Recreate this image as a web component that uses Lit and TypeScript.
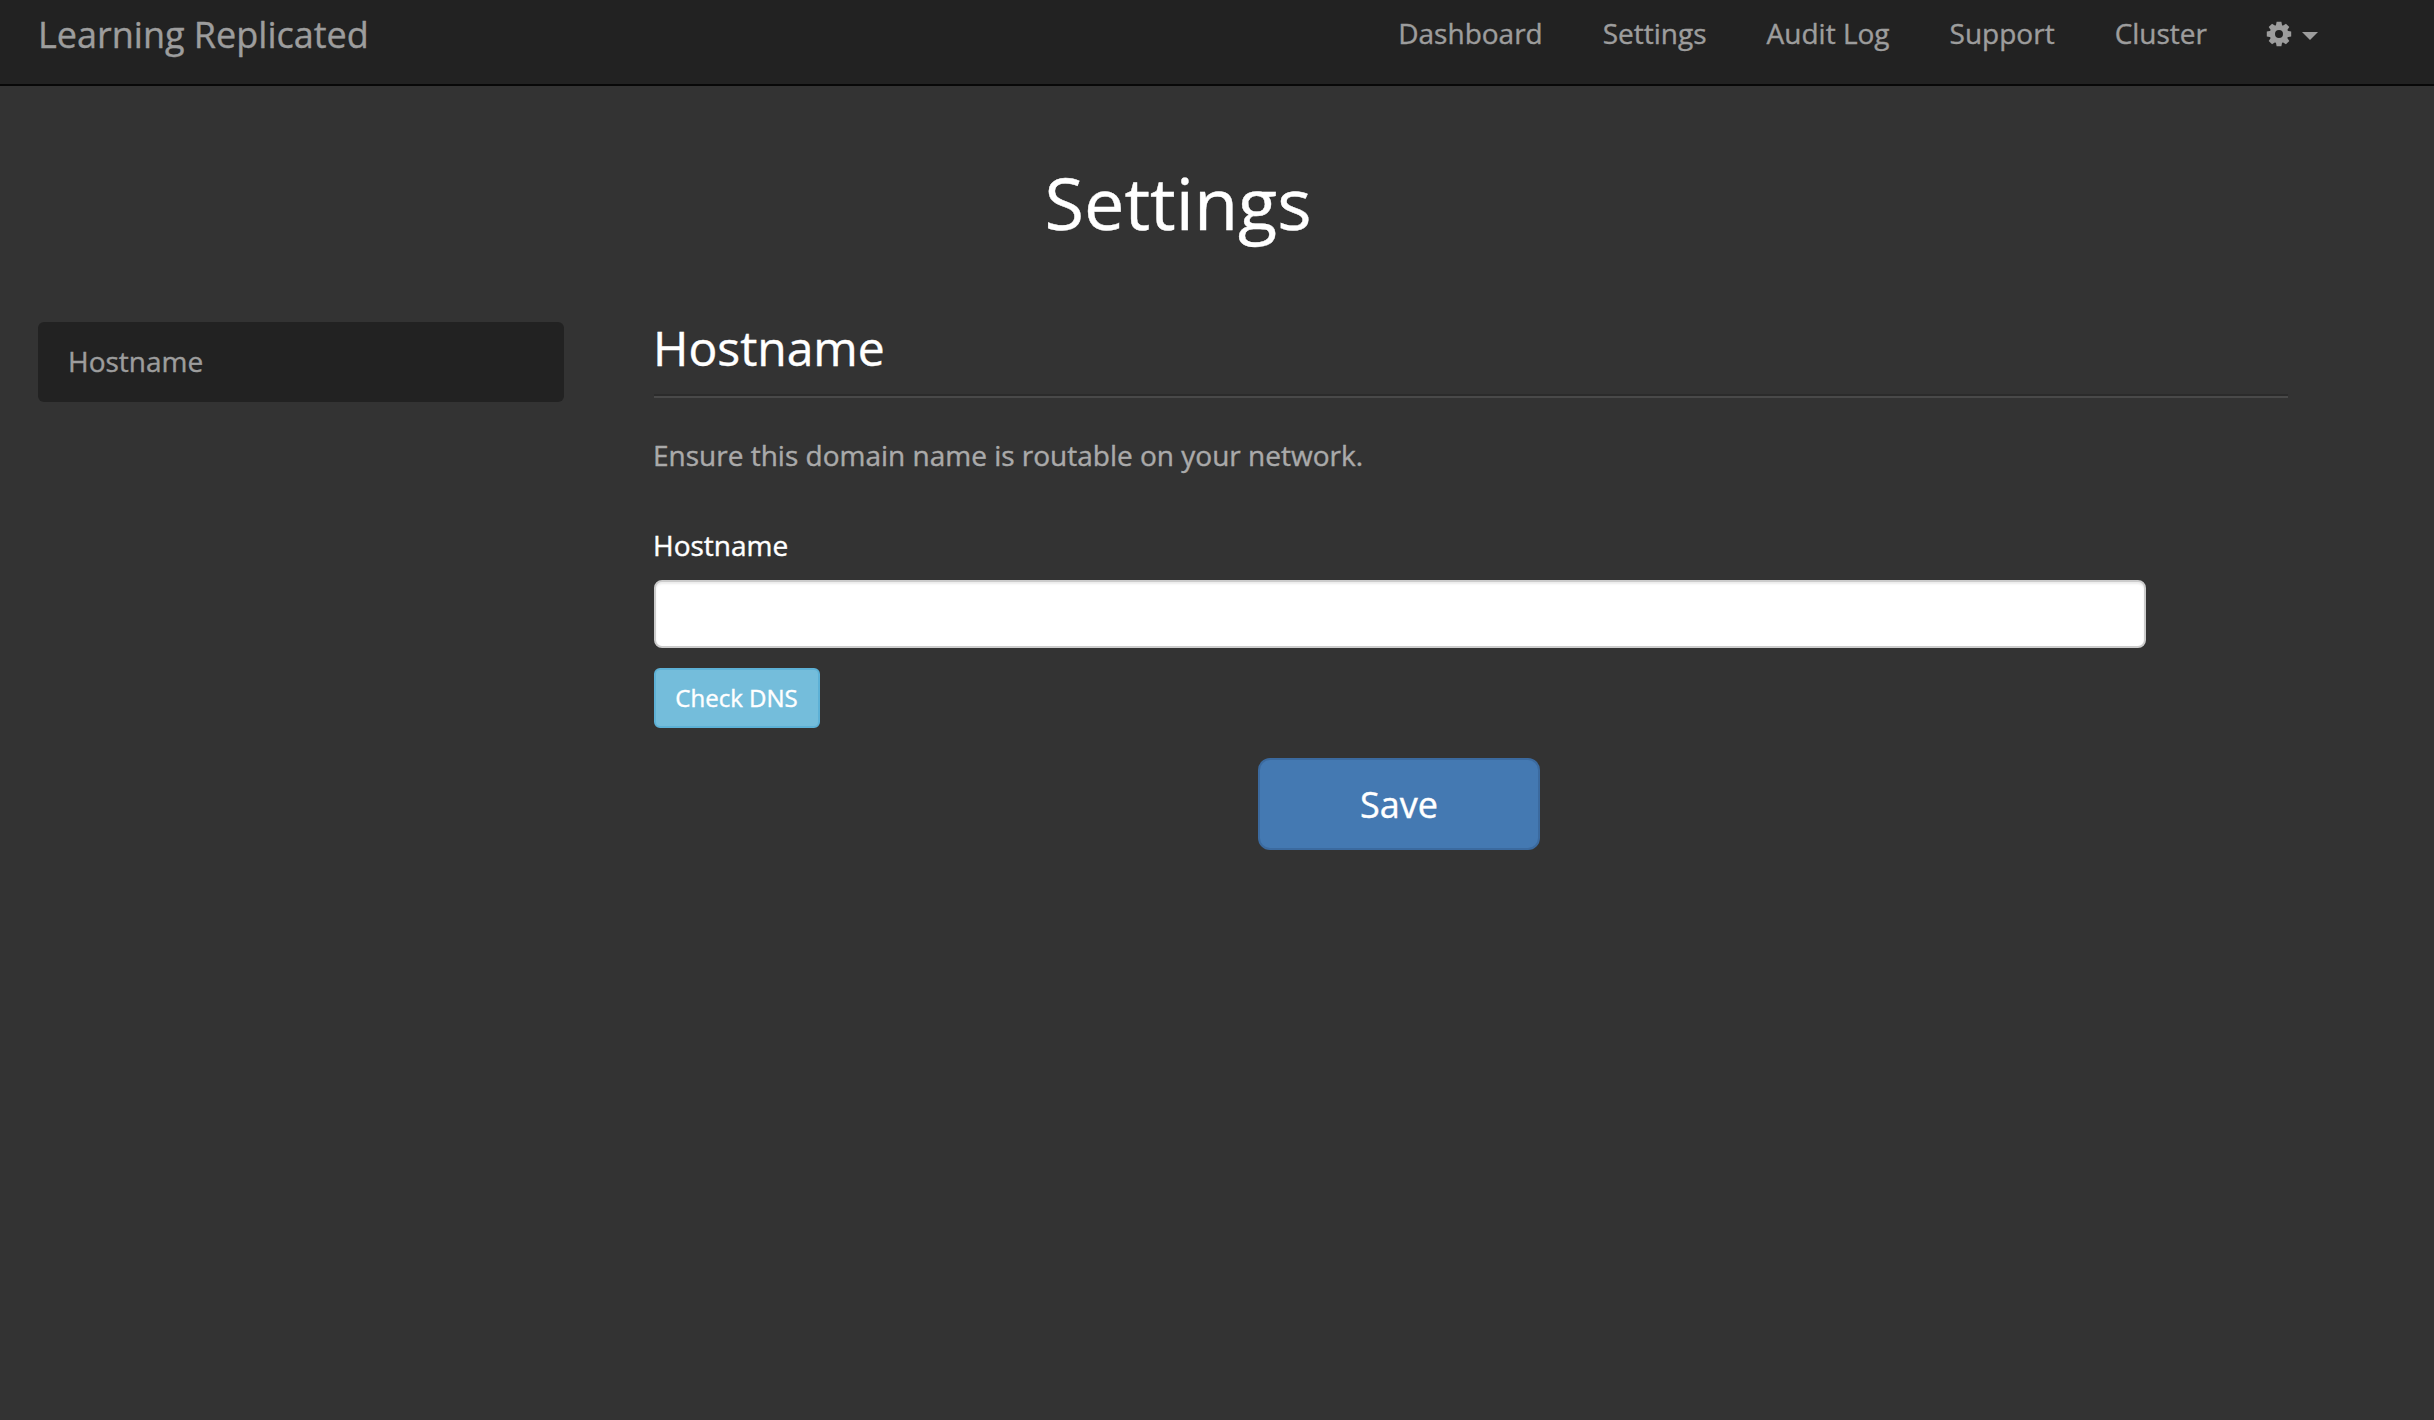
import { LitElement, html, css, svg } from "lit";
import { customElement, state } from "lit/decorators.js";

const TEETH = [0, 45, 90, 135, 180, 225, 270, 315];

@customElement("app-root")
export class AppRoot extends LitElement {
  static styles = css`
    :host {
      display: block;
      min-height: 1420px;
      background: #333;
      color: #fff;
      font-family: "Open Sans", "Noto Sans", sans-serif;
      font-size: 28px;
      line-height: 40px;
      overflow: hidden;
      -webkit-text-stroke: 0.4px currentColor;
    }
    * {
      box-sizing: border-box;
    }
    .bar {
      height: 86px;
      background: #222;
      border-bottom: 2px solid #080808;
    }
    .container {
      width: 2340px;
      margin-left: 8px;
      padding: 0 30px;
    }
    .bar .container {
      display: flex;
      justify-content: space-between;
      color: #9d9d9d;
    }
    .brand {
      font-size: 36px;
      padding-top: 15px;
    }
    .nav {
      display: flex;
      gap: 60px;
      padding-top: 13px;
    }
    .menu {
      display: flex;
      align-items: center;
      gap: 10px;
      height: 42px;
      margin-left: -1px;
    }
    .cog {
      display: block;
      width: 26px;
      height: 26px;
      fill: #9d9d9d;
    }
    .caret {
      margin-top: 4px;
      border-top: 8px solid #9d9d9d;
      border-left: 8px solid transparent;
      border-right: 8px solid transparent;
    }
    .title {
      margin: 0;
      padding-top: 66px;
      font-size: 72px;
      font-weight: 400;
      line-height: 100px;
      text-align: center;
    }
    .columns {
      display: flex;
      gap: 90px;
      padding-top: 70px;
    }
    .side {
      width: 526px;
      flex: none;
    }
    .side-link {
      height: 80px;
      padding: 21px 30px 0;
      border-radius: 6px;
      background: #222;
      color: #9d9d9d;
      line-height: 36px;
    }
    .main {
      width: 1634px;
    }
    .heading {
      margin: 0;
      height: 72px;
      padding-top: 1px;
      font-size: 48px;
      font-weight: 400;
      line-height: 50px;
      text-indent: -1px;
    }
    .rule {
      height: 4px;
      border-top: 2px solid #2b2b2b;
      background: #494949;
    }
    .help {
      margin: 0;
      padding-top: 37px;
      color: #aaa;
      text-indent: -1px;
    }
    .label {
      text-indent: -1px;
    }
    .form {
      width: 1492px;
      padding-top: 50px;
      display: flex;
      flex-direction: column;
      align-items: flex-start;
    }
    .field {
      display: block;
      width: 100%;
      height: 68px;
      margin: 15px 0 20px;
      padding: 12px 24px;
      border: 2px solid #ccc;
      border-radius: 8px;
      background: #fff;
      box-shadow: inset 0 2px 2px rgba(0, 0, 0, 0.075);
      font: inherit;
      outline: none;
    }
    .btn {
      font: inherit;
      color: #fff;
      display: flex;
      align-items: center;
      justify-content: center;
      padding: 0;
    }
    .dns {
      width: 166px;
      height: 60px;
      border: 2px solid #5db1d6;
      border-radius: 6px;
      background: #74bddb;
      font-size: 24px;
      padding: 0 1px 1px 0;
    }
    .save {
      align-self: center;
      width: 282px;
      height: 92px;
      margin: 30px 2px 0 0;
      padding-top: 1px;
      border: 2px solid #3b6a9f;
      border-radius: 12px;
      background: #4479b2;
      font-size: 36px;
    }
  `;

  @state() private links = ["Dashboard", "Settings", "Audit Log", "Support", "Cluster"];

  private cog() {
    return html`<svg class="cog" viewBox="-13 -13 26 26">
      <path
        fill-rule="evenodd"
        d="M-9.3 0a9.3 9.3 0 1 0 18.6 0a9.3 9.3 0 1 0 -18.6 0zM-4 0a4 4 0 1 0 8 0a4 4 0 1 0 -8 0z"
      />
      ${TEETH.map((a) => svg`<path transform="rotate(${a})" d="M-3.2 -8L-2.4 -12.2H2.4L3.2 -8z" />`)}
    </svg>`;
  }

  render() {
    return html`
      <header class="bar">
        <div class="container">
          <div class="brand">Learning Replicated</div>
          <nav class="nav">
            ${this.links.map((l) => html`<span>${l}</span>`)}
            <span class="menu">${this.cog()}<span class="caret"></span></span>
          </nav>
        </div>
      </header>
      <div class="container">
        <h1 class="title">Settings</h1>
        <div class="columns">
          <aside class="side"><div class="side-link">Hostname</div></aside>
          <main class="main">
            <h2 class="heading">Hostname</h2>
            <div class="rule"></div>
            <p class="help">Ensure this domain name is routable on your network.</p>
            <div class="form">
              <label class="label" for="hostname">Hostname</label>
              <input class="field" id="hostname" type="text" />
              <button class="btn dns">Check DNS</button>
              <button class="btn save">Save</button>
            </div>
          </main>
        </div>
      </div>
    `;
  }
}
